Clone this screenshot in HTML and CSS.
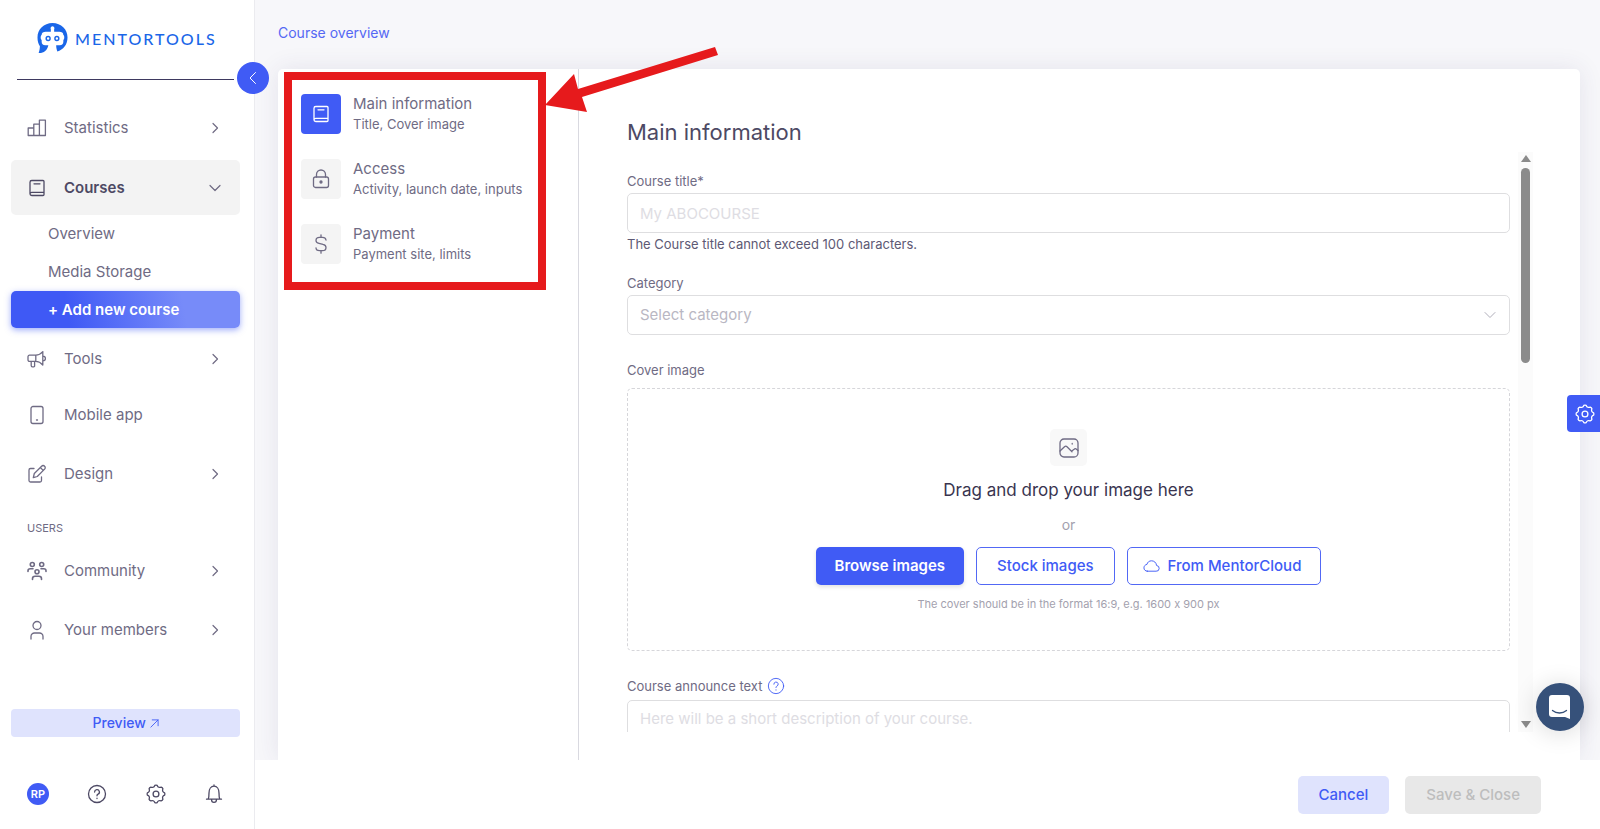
FILE: index.html
```html
<!DOCTYPE html>
<html lang="en">
<head>
    <meta charset="UTF-8">
    <title>Mentortools - Course</title>
    <link rel="stylesheet" href="styles.css">
</head>
<body>
    <!-- shared icons -->
    <svg class="sprite" aria-hidden="true">
        <symbol id="right" viewBox="0 0 16 16"><path d="M6 3.500l4.500 4.500L6 12.500"/></symbol>
        <symbol id="down" viewBox="0 0 16 16"><path d="M3 5.500l5 5 5-5"/></symbol>
        <symbol id="book" viewBox="0 0 20 20"><path d="M17 14.300V3.500a1 1 0 0 0-1-1H4.800A1.800 1.800 0 0 0 3 4.300v11.400a1.800 1.800 0 0 0 1.800 1.800H16a1 1 0 0 0 1-1v-2.200H4.800A1.800 1.800 0 0 0 3 16M7 5.800h6"/></symbol>
        <symbol id="gear" viewBox="0 0 20 20"><path d="M8.800 1.400Q10 .8 11.200 1.400Q12.400 4.300 15.200 3.100Q16.500 3.500 16.900 4.800Q15.700 7.600 18.600 8.800Q19.200 10 18.600 11.200Q15.700 12.400 16.900 15.200Q16.500 16.500 15.200 16.900Q12.400 15.700 11.200 18.600Q10 19.200 8.800 18.600Q7.600 15.700 4.800 16.900Q3.500 16.500 3.100 15.200Q4.300 12.400 1.400 11.200Q.8 10 1.400 8.800Q4.300 7.600 3.100 4.800Q3.500 3.500 4.800 3.100Q7.600 4.300 8.800 1.400z"/><circle cx="10" cy="10" r="2.900"/></symbol>
        <symbol id="help" viewBox="0 0 20 20"><circle cx="10" cy="10" r="8.500"/><path d="M7.600 8a2.400 2.400 0 1 1 3.400 2.200c-.7.300-1 .7-1 1.600M10 14.200v.4"/></symbol>
    </svg>

    <div class="app">
        <aside class="sidebar">
            <a class="logo" href="#">
                <svg class="logo-mark" viewBox="0 0 32 32">
                    <path fill="#1a66e8" d="M16 0C7 0 .5 6.600.5 15c0 4 1 6.700 2.500 9-.1 3-.6 5-1.300 7 5 .3 9-2.500 10-8H8.500C6 23 4.800 21.500 4.800 19v-1.500C3.500 17 3.500 13 4.800 12.500 4.800 10 6.500 9 9 9h5.300V6.500a2 2 0 1 1 3.400 0V9H23c2.500 0 4.200 1 4.200 3.500 1.300.5 1.300 4.500 0 5V19c0 2.500-1.200 4-3.700 4h-3.700c0 2.500.5 4.500 1.200 6.500C27 27.500 31.500 22.500 31.500 15 31.500 6.600 25 0 16 0z"/>
                    <g fill="none" stroke="#1a66e8" stroke-width="1.500"><circle cx="11.500" cy="16" r="2"/><circle cx="20.500" cy="16" r="2"/></g>
                </svg>
                <span>MENTORTOOLS</span>
            </a>
            <hr class="divider">
            <button class="collapse" aria-label="Collapse menu"><svg viewBox="0 0 16 16"><path d="M10.500 2.500L5 8l5.500 5.500"/></svg></button>

            <nav class="menu">
                <a class="menu-item" href="#">
                    <svg class="icon" viewBox="0 0 20 20"><path d="M1.200 10h5.600v7.500H1.200zM6.800 6.200h5.600v11.300H6.800zM12.400 2.200h6v15.300h-6z"/></svg>
                    Statistics <svg class="chevron"><use href="#right"/></svg>
                </a>
                <a class="menu-item active" href="#">
                    <svg class="icon"><use href="#book"/></svg>
                    Courses <svg class="chevron"><use href="#down"/></svg>
                </a>
                <div class="submenu">
                    <a href="#">Overview</a>
                    <a href="#">Media Storage</a>
                    <a class="add-course" href="#">+ Add new course</a>
                </div>
                <a class="menu-item tight" href="#">
                    <svg class="icon" viewBox="0 0 20 20"><path d="M2.500 6.200h6.300v6.200H2.500a1.500 1.500 0 0 1-1.500-1.500V7.700a1.500 1.500 0 0 1 1.500-1.500zM8.800 6.200c2.500 0 5-1.300 7-3.600v13.400c-2-2.300-4.500-3.600-7-3.600M15.800 7.200c3.500 0 3.500 4.600 0 4.600M4.200 12.400v4.200a1.200 1.200 0 0 0 1.200 1.200h1.400a.8.8 0 0 0 .8-.8v-4.600"/></svg>
                    Tools <svg class="chevron"><use href="#right"/></svg>
                </a>
                <a class="menu-item" href="#">
                    <svg class="icon" viewBox="0 0 20 20"><rect x="4" y="1.500" width="12" height="17" rx="2"/><path d="M9.500 15h1"/></svg>
                    Mobile app
                </a>
                <a class="menu-item" href="#">
                    <svg class="icon" viewBox="0 0 20 20"><path d="M7 4.500H3.500A1.500 1.500 0 0 0 2 6v10.500A1.500 1.500 0 0 0 3.500 18H13a1.500 1.500 0 0 0 1.500-1.500V13M6.300 13.700l1-4.200 7.300-7.300a2 2 0 0 1 3 0 2 2 0 0 1 0 2.900l-7.300 7.400zM13.300 3.500l2.900 2.900"/></svg>
                    Design <svg class="chevron"><use href="#right"/></svg>
                </a>
                <div class="menu-heading">USERS</div>
                <a class="menu-item" href="#">
                    <svg class="icon community" viewBox="0 0 20 20"><circle cx="5.300" cy="3.500" r="2"/><circle cx="14.700" cy="3.500" r="2"/><circle cx="10" cy="10.700" r="2"/><path d="M1 10.500V9.800c0-1.500 1-2 2.300-2H6M14 7.800h2.700c1.300 0 2.300.5 2.300 2v.7M5.500 18.500v-.7c0-1.600 1-2.500 2.500-2.500h4c1.500 0 2.500.9 2.500 2.500v.7"/></svg>
                    Community <svg class="chevron"><use href="#right"/></svg>
                </a>
                <a class="menu-item" href="#">
                    <svg class="icon" viewBox="0 0 20 20"><circle cx="10" cy="5.500" r="4"/><path d="M4 19v-2.500A3.500 3.500 0 0 1 7.500 13h5a3.500 3.500 0 0 1 3.500 3.500V19"/></svg>
                    Your members <svg class="chevron"><use href="#right"/></svg>
                </a>
            </nav>

            <button class="preview">Preview <svg viewBox="0 0 10 10"><path d="M1 9l8-8M2.500 1H9v6.500"/></svg></button>

            <div class="tools">
                <button class="avatar">RP</button>
                <button aria-label="Help"><svg class="icon"><use href="#help"/></svg></button>
                <button aria-label="Settings"><svg class="icon"><use href="#gear"/></svg></button>
                <button aria-label="Notifications"><svg class="icon" viewBox="0 0 20 20"><path d="M2.500 15.200h15M4.200 15.200c.6-1.400.8-3 .8-6.200 0-4 2-6.800 5-6.800s5 2.800 5 6.800c0 3.200.2 4.800.8 6.200M10 1v1M7.500 15.500c0 3.800 5 3.800 5 0"/></svg></button>
            </div>
        </aside>

        <main class="main">
            <header class="topbar"><a href="#">Course overview</a></header>

            <div class="card">
                <nav class="steps">
                    <a class="step current" href="#">
                        <span class="step-icon"><svg class="icon"><use href="#book"/></svg></span>
                        <span><span class="step-title">Main information</span><span class="step-text">Title, Cover image</span></span>
                    </a>
                    <a class="step" href="#">
                        <span class="step-icon"><svg class="icon" viewBox="0 0 20 20"><rect x="2.500" y="8" width="15" height="10.500" rx="2"/><path d="M5.500 8V5.500a4.500 4.500 0 0 1 9 0V8"/><circle cx="10" cy="13" r="1" fill="currentColor"/></svg></span>
                        <span><span class="step-title">Access</span><span class="step-text">Activity, launch date, inputs</span></span>
                    </a>
                    <a class="step" href="#">
                        <span class="step-icon"><svg class="icon" viewBox="0 0 20 20"><path d="M15 6c-.3-1.700-1.700-2.700-3.500-2.700h-3C6.500 3.300 5 4.600 5 6.400 5 8.300 6.300 9 8 9.400l4 1c1.800.4 3 1.300 3 3.100 0 1.900-1.500 3.200-3.500 3.200h-3C6.500 16.700 5 15.600 5 13.800M10 .8v2.500M10 16.700v2.500"/></svg></span>
                        <span><span class="step-title">Payment</span><span class="step-text">Payment site, limits</span></span>
                    </a>
                </nav>

                <section class="panel">
                    <h1>Main information</h1>
                    <div class="scroller">
                        <form class="form">
                            <div class="field">
                                <label for="title">Course title*</label>
                                <input id="title" type="text" placeholder="My ABOCOURSE">
                                <p class="hint">The Course title cannot exceed 100 characters.</p>
                            </div>
                            <div class="field category">
                                <label for="category">Category</label>
                                <div class="select-wrap">
                                    <select id="category"><option>Select category</option></select>
                                    <svg><use href="#down"/></svg>
                                </div>
                            </div>
                            <div class="field cover">
                                <label for="cover">Cover image</label>
                                <div class="dropzone">
                                    <span class="drop-icon"><svg class="icon" viewBox="0 0 20 20"><rect x="1" y="1" width="18" height="18" rx="4"/><path d="M1 13l4.500-4.300c.9-.8 1.700-.8 2.500 0l5 5M19 12.500l-1.500-1.300c-.8-.7-1.600-.7-2.400 0L12.500 13.200M13.200 5.500v.6"/></svg></span>
                                    <p class="drop-title">Drag and drop your image here</p>
                                    <p class="drop-or">or</p>
                                    <div class="drop-buttons">
                                        <button type="button" class="btn primary" id="cover">Browse images</button>
                                        <button type="button" class="btn outline">Stock images</button>
                                        <button type="button" class="btn outline cloud"><svg viewBox="0 0 18 14"><path d="M4.500 12.500h9.300a3 3 0 0 0 .6-6C14 3.300 11.700 1.500 9 1.500 6.500 1.500 4.700 3 4.200 5.300 2.200 5.600 1 7.200 1 9c0 2 1.500 3.500 3.500 3.500z"/></svg>From MentorCloud</button>
                                    </div>
                                    <p class="drop-note">The cover should be in the format 16:9, e.g. 1600 x 900 px</p>
                                </div>
                            </div>
                            <div class="field announce">
                                <label for="announce">Course announce text <svg><use href="#help"/></svg></label>
                                <textarea id="announce" placeholder="Here will be a short description of your course."></textarea>
                            </div>
                        </form>
                        <div class="scrollbar">
                            <span class="arrow up"></span>
                            <span class="thumb"></span>
                            <span class="arrow dn"></span>
                        </div>
                    </div>
                </section>

                <!-- highlight with a pointer -->
                <div class="highlight"></div>
                <svg class="pointer" viewBox="0 0 174 66"><path fill="#e61a1c" d="M0 58L29 27l4 15L170 0l3 8L37 50l5 15z"/></svg>
            </div>

            <footer class="footer">
                <button class="btn cancel">Cancel</button>
                <button class="btn save" disabled>Save &amp; Close</button>
            </footer>
        </main>
    </div>

    <button class="settings-tab" aria-label="Settings"><svg class="icon"><use href="#gear"/></svg></button>
    <button class="chat" aria-label="Chat"><svg viewBox="0 0 24 26"><path fill="#fff" d="M4 1h15a3 3 0 0 1 3 3v21l-5-2H4a3 3 0 0 1-3-3V4a3 3 0 0 1 3-3z"/><path fill="none" stroke="#36517a" stroke-width="1.300" stroke-linecap="round" d="M4.500 16.500c4 3.300 10 3.300 14 0"/></svg></button>
</body>
</html>
```
FILE: styles.css
```css
* {
    box-sizing: border-box;
}
body {
    margin: 0;
    font-family: Inter, "Liberation Sans", sans-serif;
    font-size: 15px;
    font-feature-settings: "calt" 0;
    line-height: 20px;
    color: #6f6b84;
    background: #f7f7fa;
}
a {
    color: inherit;
    text-decoration: none;
}
button, input, select, textarea {
    font: inherit;
    color: inherit;
}
button {
    border: 0;
    padding: 0;
    background: none;
}
p, h1 {
    margin: 0;
}
svg {
    fill: none;
    stroke: currentColor;
    stroke-linecap: round;
    stroke-linejoin: round;
}
.sprite {
    display: none;
}
.icon {
    width: 20px;
    height: 20px;
    stroke-width: 1.3;
}
.app {
    display: flex;
    height: 100vh;
}

/* sidebar */
.sidebar {
    position: relative;
    z-index: 2;
    width: 255px;
    flex: none;
    display: flex;
    flex-direction: column;
    padding: 0 14px 0 11px;
    background: #fff;
    border-right: 1px solid #ebebef;
}
.logo {
    display: flex;
    align-items: center;
    gap: 7px;
    height: 79px;
    padding: 0 0 2px 26px;
    font-family: Lato, sans-serif;
    font-size: 16px;
    font-weight: 500;
    letter-spacing: 2px;
    color: #1a66e8;
}
.logo-mark {
    width: 31px;
    height: 31px;
    stroke: none;
}
.divider {
    width: 217px;
    margin: 0 6px;
    border: 0;
    border-top: 1px solid #3e3960;
}
.collapse {
    position: absolute;
    top: 62px;
    right: -15px;
    width: 32px;
    height: 32px;
    border-radius: 50%;
    background: #405bf5;
    color: #fff;
}
.collapse svg {
    display: block;
    width: 16px;
    height: 16px;
    margin: auto;
}
.menu {
    padding-top: 21px;
}
.menu-item {
    display: flex;
    align-items: center;
    height: 54px;
    padding: 0 17px 0 16px;
    margin-bottom: 5px;
    border-radius: 5px;
}
.menu-item .icon {
    margin-right: 17px;
}
.menu-item .community {
    stroke-width: 1.6;
}
.menu-item .chevron {
    margin-left: auto;
}
.menu-item.active {
    height: 55px;
    margin-bottom: 0;
    background: #f3f3f3;
    color: #4d4964;
    font-weight: 600;
}
.menu-item.active .chevron {
    color: #6f6b84;
}
.menu-item.tight {
    margin-bottom: 2px;
}
.chevron {
    width: 16px;
    height: 16px;
    stroke-width: 1.2;
}
.submenu {
    margin-bottom: 4px;
}
.submenu a {
    display: block;
    height: 38px;
    padding-left: 37px;
    line-height: 38px;
}
.submenu .add-course {
    height: 37px;
    border-radius: 5px;
    background: linear-gradient(80deg, #3f59f5 25%, #778bf9 75%);
    box-shadow: 0 2px 6px rgba(64, 91, 245, 0.5);
    color: #fff;
    font-weight: 600;
    line-height: 37px;
}
.menu-heading {
    padding: 12px 16px 6px;
    font-size: 11px;
}
.preview {
    height: 28px;
    margin-top: auto;
    border-radius: 4px;
    background: #dfe3fd;
    color: #405bf5;
    font-size: 14px;
    font-weight: 500;
}
.preview svg {
    width: 9px;
    height: 9px;
}
.tools {
    display: flex;
    justify-content: space-between;
    align-items: center;
    height: 92px;
    padding: 22px 16px 0;
    color: #4d4964;
}
.tools .icon {
    display: block;
}
.avatar {
    width: 22px;
    height: 22px;
    border-radius: 50%;
    background: #405bf5;
    color: #fff;
    font-size: 11px;
    font-weight: 600;
}

/* main area */
.main {
    flex: 1;
    min-width: 0;
    display: flex;
    flex-direction: column;
}
.topbar {
    display: flex;
    align-items: center;
    height: 69px;
    padding: 0 23px 4px;
    color: #5568f4;
    font-size: 14px;
}
.card {
    position: relative;
    flex: 1;
    min-height: 0;
    display: flex;
    margin: 0 20px 0 23px;
    border-radius: 5px 5px 0 0;
    background: #fff;
    box-shadow: 0 0 24px rgba(60, 50, 110, 0.1);
}
.steps {
    display: flex;
    flex-direction: column;
    gap: 25px;
    width: 301px;
    padding: 25px 23px;
    border-right: 1px solid #d9d9e0;
}
.step {
    display: flex;
    gap: 12px;
    height: 40px;
    white-space: nowrap;
}
.step-icon {
    display: flex;
    align-items: center;
    justify-content: center;
    width: 40px;
    height: 40px;
    border-radius: 4px;
    background: #f4f4f4;
}
.current .step-icon {
    background: #405bf5;
    color: #fff;
}
.step-title, .step-text {
    display: block;
}
.step-text {
    font-size: 13px;
}
.highlight {
    position: absolute;
    top: 3px;
    left: 6px;
    width: 262px;
    height: 218px;
    border: 8px solid #e61a1c;
    pointer-events: none;
}
.pointer {
    position: absolute;
    top: -22px;
    left: 267px;
    width: 174px;
    height: 66px;
    stroke: none;
}
.panel {
    flex: 1;
    min-width: 0;
    display: flex;
    flex-direction: column;
    padding: 48px 47px 28px 48px;
}
h1 {
    height: 35px;
    color: #4d4964;
    font-size: 22px;
    font-weight: 400;
    line-height: 30px;
}
.scroller {
    flex: 1;
    min-height: 0;
    display: flex;
    gap: 8px;
    overflow: hidden;
}
.form {
    flex: 1;
    padding-top: 19px;
    overflow: hidden;
}
.field label {
    display: flex;
    align-items: center;
    height: 20px;
    margin-bottom: 2px;
    font-size: 13px;
}
.field label svg {
    width: 18px;
    height: 18px;
    margin-left: 5px;
    color: #405bf5;
}
input, select, textarea {
    display: block;
    width: 100%;
    height: 40px;
    padding: 0 12px;
    border: 1px solid #dedee0;
    border-radius: 5px;
    background: #fff;
}
textarea {
    height: 120px;
    padding-top: 8px;
    resize: none;
}
::placeholder {
    color: #dedde3;
    opacity: 1;
}
.hint {
    padding-top: 1px;
    color: #5d5974;
    font-size: 13px;
}
.category {
    margin-top: 19px;
}
.select-wrap {
    position: relative;
}
select {
    appearance: none;
    color: #b9b7c3;
}
.select-wrap svg {
    position: absolute;
    top: 12px;
    right: 12px;
    width: 16px;
    height: 16px;
    color: #b0aeba;
}
.cover {
    margin: 25px 0;
}
.cover label {
    margin-bottom: 8px;
}
.announce label {
    margin-bottom: 4px;
}
.dropzone {
    display: flex;
    flex-direction: column;
    align-items: center;
    height: 263px;
    padding-top: 40px;
    border: 1px dashed #d6d6da;
    border-radius: 5px;
}
.drop-icon {
    display: flex;
    align-items: center;
    justify-content: center;
    width: 37px;
    height: 37px;
    border-radius: 5px;
    background: #f8f8f8;
}
.drop-title {
    margin-top: 14px;
    color: #39344f;
    font-size: 17px;
}
.drop-or {
    margin-top: 15px;
    color: #a3a1ae;
    font-size: 14px;
}
.drop-buttons {
    display: flex;
    gap: 12px;
    margin-top: 12px;
}
.drop-note {
    margin-top: 9px;
    color: #a3a1ae;
    font-size: 11px;
}
.btn {
    height: 38px;
    padding: 0 20px;
    border-radius: 5px;
    font-weight: 500;
    white-space: nowrap;
}
.btn.primary {
    padding: 0 19px;
    background: #405bf5;
    box-shadow: 0 2px 4px rgba(0, 0, 0, 0.12);
    color: #fff;
    font-weight: 600;
}
.btn.outline {
    border: 1px solid #5268f5;
    color: #405bf5;
}
.btn.cloud {
    display: flex;
    align-items: center;
    gap: 8px;
    padding: 0 19px 0 15px;
}
.cloud svg {
    width: 17px;
    height: 14px;
}
.btn.cancel {
    background: #dfe3fd;
    color: #405bf5;
}
.btn.save {
    background: #e8e8e8;
    color: #bdbdbd;
}
.scrollbar {
    display: flex;
    flex-direction: column;
    align-items: center;
    width: 15px;
    padding: 3px 0 4px;
    background: #fbfbfb;
}
.arrow {
    border: 5px solid transparent;
}
.arrow.up {
    border-top: 0;
    border-bottom: 7px solid #8b8b8b;
}
.arrow.dn {
    margin-top: auto;
    border-bottom: 0;
    border-top: 7px solid #8b8b8b;
}
.thumb {
    width: 9px;
    height: 34%;
    margin-top: 6px;
    border-radius: 5px;
    background: #8b8b8b;
}
.footer {
    position: relative;
    display: flex;
    justify-content: flex-end;
    gap: 16px;
    height: 69px;
    padding: 16px 59px 0;
    background: #fff;
}
.footer .btn {
    padding: 0 21px;
}

/* floating buttons */
.settings-tab {
    position: fixed;
    z-index: 3;
    top: 395px;
    right: 0;
    width: 33px;
    height: 37px;
    padding-left: 8px;
    border-radius: 4px 0 0 4px;
    background: #405bf5;
    color: #fff;
}
.settings-tab .icon {
    display: block;
}
.chat {
    position: fixed;
    z-index: 3;
    right: 16px;
    bottom: 98px;
    width: 48px;
    height: 48px;
    border-radius: 50%;
    background: #36517a;
    box-shadow: 0 2px 24px rgba(0, 0, 0, 0.15);
}
.chat svg {
    display: block;
    width: 24px;
    height: 26px;
    margin: auto;
    stroke: none;
}
```
